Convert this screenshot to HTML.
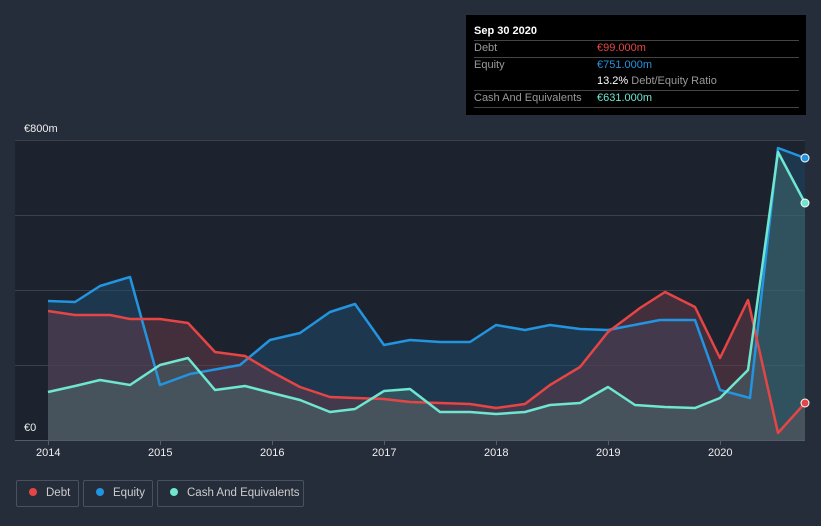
<!DOCTYPE html>
<html><head><meta charset="utf-8"><style>
body{margin:0;width:821px;height:526px;background:#262d3a;font-family:"Liberation Sans",sans-serif;overflow:hidden;position:relative}
.tt{position:absolute;left:466px;top:15px;width:340px;height:100px;background:#000}
.tt .r{position:absolute;left:8px;width:325px;font-size:11px;color:#999}
.line{position:absolute;left:8px;width:325px;height:1px;background:#444}
.leg{position:absolute;top:480px;height:27px;border:1px solid #4a515e;border-radius:2px;color:#ccc;font-size:11.5px;line-height:25px;box-sizing:border-box;white-space:nowrap}
.leg i{display:inline-block;width:8px;height:8px;border-radius:50%;margin:0 9px 0 12px;vertical-align:0px}
.ax{position:absolute;color:#eee;font-size:11px}
</style></head><body>
<svg width="821" height="526" style="position:absolute;left:0;top:0">
<rect x="15" y="140" width="790" height="300" fill="#1d232e"/>
<g stroke="#3a414d" stroke-width="1"><line x1="15" y1="140.5" x2="805" y2="140.5"/><line x1="15" y1="215.5" x2="805" y2="215.5"/><line x1="15" y1="290.5" x2="805" y2="290.5"/><line x1="15" y1="365.5" x2="805" y2="365.5"/></g>
<path d="M48,301 L75,302 100,286 130,277 160,385 190,374 240,365 270,340 300,333 330,312 355,304 384,345 410,340 440,342 470,342 496,325 525,330 550,325 580,329 608,330 660,320 695,320 720,390 750,398 778,148 805,158 L805,440 48,440Z" fill="#1e4a6a" fill-opacity="0.55"/>
<path d="M48,311 L75,315 110,315 130,319 160,319 188,323 215,352 245,356 272,372 300,387 330,397 355,398 384,399 410,402 440,403 470,404 496,408 525,404 550,385 580,367 608,332 640,308 665,292 695,307 720,358 748,300 778,433 805,403 L805,440 48,440Z" fill="#6a3a4a" fill-opacity="0.5"/>
<path d="M48,392 L75,386 100,380 130,385 160,365 188,358 215,390 245,386 272,393 300,400 330,412 355,409 384,391 410,389 440,412 470,412 496,414 525,412 550,405 580,403 608,387 635,405 665,407 695,408 720,398 748,370 778,152 805,203 L805,440 48,440Z" fill="#4a7a78" fill-opacity="0.4"/>
<g fill="none" stroke-width="2.5" stroke-linejoin="round">
<path d="M48,301 L75,302 100,286 130,277 160,385 190,374 240,365 270,340 300,333 330,312 355,304 384,345 410,340 440,342 470,342 496,325 525,330 550,325 580,329 608,330 660,320 695,320 720,390 750,398 778,148 805,158" stroke="#2394df"/>
<path d="M48,311 L75,315 110,315 130,319 160,319 188,323 215,352 245,356 272,372 300,387 330,397 355,398 384,399 410,402 440,403 470,404 496,408 525,404 550,385 580,367 608,332 640,308 665,292 695,307 720,358 748,300 778,433 805,403" stroke="#e64545"/>
<path d="M48,392 L75,386 100,380 130,385 160,365 188,358 215,390 245,386 272,393 300,400 330,412 355,409 384,391 410,389 440,412 470,412 496,414 525,412 550,405 580,403 608,387 635,405 665,407 695,408 720,398 748,370 778,152 805,203" stroke="#6ee6d0"/>
</g>
<circle cx="805" cy="158" r="4" fill="#2394df" stroke="#fff" stroke-width="1"/>
<circle cx="805" cy="403" r="4" fill="#e64545" stroke="#fff" stroke-width="1"/>
<circle cx="805" cy="203" r="4" fill="#6ee6d0" stroke="#fff" stroke-width="1"/>
<line x1="15" y1="440.5" x2="805" y2="440.5" stroke="#555c68"/>
<g stroke="#555c68"><line x1="48.5" y1="440" x2="48.5" y2="445"/><line x1="160.5" y1="440" x2="160.5" y2="445"/><line x1="272.5" y1="440" x2="272.5" y2="445"/><line x1="384.5" y1="440" x2="384.5" y2="445"/><line x1="496.5" y1="440" x2="496.5" y2="445"/><line x1="608.5" y1="440" x2="608.5" y2="445"/><line x1="720.5" y1="440" x2="720.5" y2="445"/></g>
</svg>
<div class="ax" style="left:24px;top:123px">€800m</div>
<div class="ax" style="left:24px;top:422px">€0</div>
<div class="ax" style="left:36px;top:447px">2014</div>
<div class="ax" style="left:148px;top:447px">2015</div>
<div class="ax" style="left:260px;top:447px">2016</div>
<div class="ax" style="left:372px;top:447px">2017</div>
<div class="ax" style="left:484px;top:447px">2018</div>
<div class="ax" style="left:596px;top:447px">2019</div>
<div class="ax" style="left:708px;top:447px">2020</div>
<div class="tt">
<div class="r" style="top:10px;color:#fff;font-weight:bold">Sep 30 2020</div>
<div class="line" style="top:25px"></div>
<div class="r" style="top:27px">Debt<span style="position:absolute;left:123px;color:#e64545">€99.000m</span></div>
<div class="line" style="top:42px"></div>
<div class="r" style="top:44px">Equity<span style="position:absolute;left:123px;color:#2394df">€751.000m</span></div>
<div class="r" style="top:60px"><span style="position:absolute;left:123px;color:#999;white-space:nowrap"><b style="color:#fff;font-weight:normal">13.2%</b> Debt/Equity Ratio</span>&nbsp;</div>
<div class="line" style="top:75px"></div>
<div class="r" style="top:77px">Cash And Equivalents<span style="position:absolute;left:123px;color:#6ee6d0">€631.000m</span></div>
<div class="line" style="top:92px"></div>
</div>
<div class="leg" style="left:16px;width:63px"><i style="background:#e64545"></i>Debt</div>
<div class="leg" style="left:83px;width:70px"><i style="background:#2394df"></i>Equity</div>
<div class="leg" style="left:157px;width:147px"><i style="background:#6ee6d0"></i>Cash And Equivalents</div>
</body></html>
